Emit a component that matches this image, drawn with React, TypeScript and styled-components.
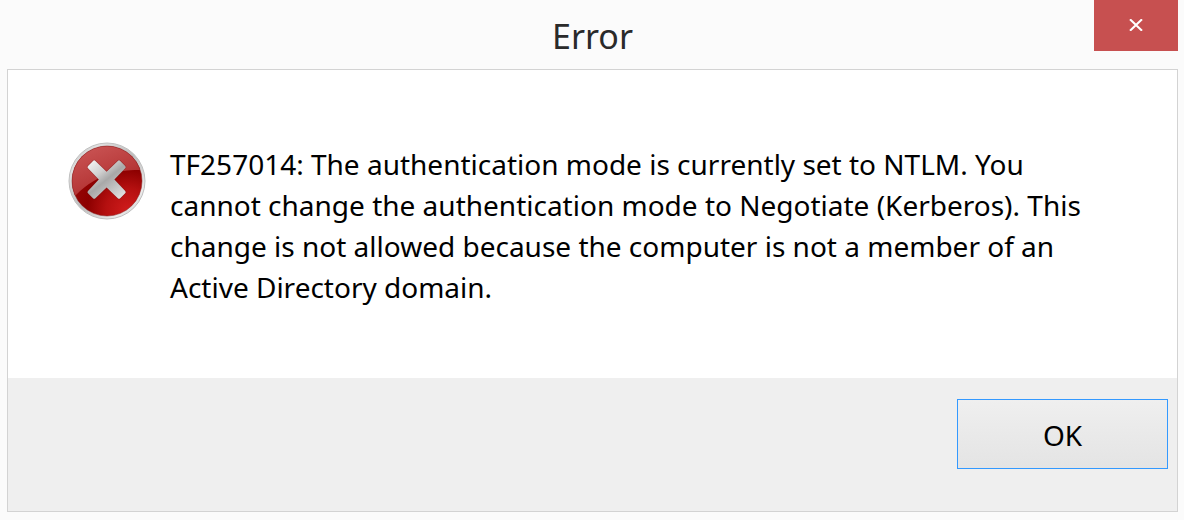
import React from "react";
import styled, { createGlobalStyle } from "styled-components";

const GlobalStyle = createGlobalStyle`
  *, *::before, *::after { box-sizing: border-box; }
  body {
    margin: 0;
    background: #fbfbfb;
    color: #000;
    font-family: "Noto Sans", "Open Sans", sans-serif;
  }
  #root { min-height: 100vh; display: flex; flex-direction: column; }
`;

const Dialog = styled.div`
  flex: 1;
  display: flex;
  flex-direction: column;
  padding: 0 6px 8px 7px;
`;

const TitleBar = styled.header`
  display: grid;
  grid-template-columns: 84px 1fr 84px;
  align-items: start;
  min-height: 69px;
`;

const Title = styled.h1`
  grid-column: 2;
  margin: 0;
  padding-top: 10px;
  font-size: 34px;
  line-height: 52px;
  font-weight: 400;
  text-align: center;
  color: #2a2a2a;
`;

const CloseButton = styled.button`
  display: flex;
  align-items: center;
  justify-content: center;
  height: 51px;
  padding: 0 0 2px;
  border: 0;
  background: #c75050;
  color: #fff;
`;

const Panel = styled.main`
  flex: 1;
  display: flex;
  flex-direction: column;
  border: 1px solid #d3d3d3;
  background: #fff;
`;

const Content = styled.section`
  display: flex;
  align-items: flex-start;
  gap: 24px;
  min-height: 308px;
  padding: 72px 60px 64px;
`;

const Message = styled.p`
  flex: 1;
  max-width: 930px;
  margin: 0;
  padding-top: 2px;
  font-size: 28px;
  line-height: 41px;
`;

const Footer = styled.footer`
  flex: 1;
  display: flex;
  align-items: flex-start;
  justify-content: flex-end;
  padding: 21px 9px 42px;
  background: #efefef;
`;

const PushButton = styled.button`
  width: 211px;
  height: 70px;
  padding: 2px 0 0;
  border: 1px solid #3399ff;
  background: linear-gradient(#efefef, #e4e4e4);
  color: #000;
  font-family: inherit;
  font-size: 28px;
  line-height: 40px;
`;

const IconSvg = styled.svg`
  flex: none;
  display: block;
`;

const ErrorIcon = () => (
  <IconSvg width="78" height="78" viewBox="0 0 78 78" role="img" aria-label="Error">
    <defs>
      <linearGradient id="rim" x1="0" y1="0" x2="1" y2="1">
        <stop offset="0" stopColor="#a8a8a8" />
        <stop offset="0.2" stopColor="#e2e2e2" />
        <stop offset="0.5" stopColor="#bcbcbc" />
        <stop offset="0.8" stopColor="#ececec" />
        <stop offset="1" stopColor="#b0b0b0" />
      </linearGradient>
      <radialGradient id="base" cx="0.8" cy="0.92" r="0.9">
        <stop offset="0" stopColor="#d01c1c" />
        <stop offset="0.35" stopColor="#b51010" />
        <stop offset="0.65" stopColor="#8c0000" />
        <stop offset="1" stopColor="#980808" />
      </radialGradient>
      <linearGradient id="gloss" x1="0.2" y1="0" x2="0.8" y2="1">
        <stop offset="0" stopColor="#cc5858" />
        <stop offset="0.6" stopColor="#b83a3a" />
        <stop offset="1" stopColor="#a02020" />
      </linearGradient>
      <linearGradient id="cross" x1="0" y1="0" x2="0.8" y2="1">
        <stop offset="0" stopColor="#f8f8f8" />
        <stop offset="0.35" stopColor="#d0d0d0" />
        <stop offset="0.55" stopColor="#a8a8a8" />
        <stop offset="1" stopColor="#dedede" />
      </linearGradient>
      <clipPath id="disc">
        <circle cx="39" cy="39" r="35" />
      </clipPath>
    </defs>
    <circle cx="39" cy="39" r="38" fill="url(#rim)" stroke="#c0c0c0" />
    <circle cx="39" cy="39" r="35" fill="url(#base)" />
    <path
      d="M0 0H78V28C65 28 56 28 45 31C30 35 19 42 8 53H0Z"
      fill="url(#gloss)"
      clipPath="url(#disc)"
    />
    <circle cx="39" cy="39" r="35" fill="none" stroke="#8a2020" strokeOpacity="0.5" />
    <path
      d="M27.4 18.9L38.6 29.8L49.8 18.9Q51 17.8 52.2 18.9L57.2 23.9Q58.3 25 57.2 26.2L46.4 37.6L57.2 49Q58.3 50.2 57.2 51.3L52.2 56.3Q51 57.4 49.8 56.3L38.6 45.4L27.4 56.3Q26.2 57.4 25 56.3L20 51.3Q18.9 50.2 20 49L30.8 37.6L20 26.2Q18.9 25 20 23.9L25 18.9Q26.2 17.8 27.4 18.9Z"
      fill="url(#cross)"
      stroke="#701414"
      strokeOpacity="0.4"
      strokeWidth="1.2"
      paintOrder="stroke"
    />
  </IconSvg>
);

const CloseGlyph = () => (
  <IconSvg width="14" height="12" viewBox="0 0 14 12" aria-hidden="true">
    <path d="M1 0.3L13 11.7M13 0.3L1 11.7" fill="none" stroke="currentColor" strokeWidth="2.1" />
  </IconSvg>
);

export default function App() {
  return (
    <>
      <GlobalStyle />
      <Dialog role="alertdialog" aria-labelledby="dialog-title" aria-describedby="dialog-message">
        <TitleBar>
          <Title id="dialog-title">Error</Title>
          <CloseButton type="button" aria-label="Close">
            <CloseGlyph />
          </CloseButton>
        </TitleBar>
        <Panel>
          <Content>
            <ErrorIcon />
            <Message id="dialog-message">
              TF257014: The authentication mode is currently set to NTLM. You cannot change the
              authentication mode to Negotiate (Kerberos). This change is not allowed because the
              computer is not a member of an Active Directory domain.
            </Message>
          </Content>
          <Footer>
            <PushButton type="button">OK</PushButton>
          </Footer>
        </Panel>
      </Dialog>
    </>
  );
}
